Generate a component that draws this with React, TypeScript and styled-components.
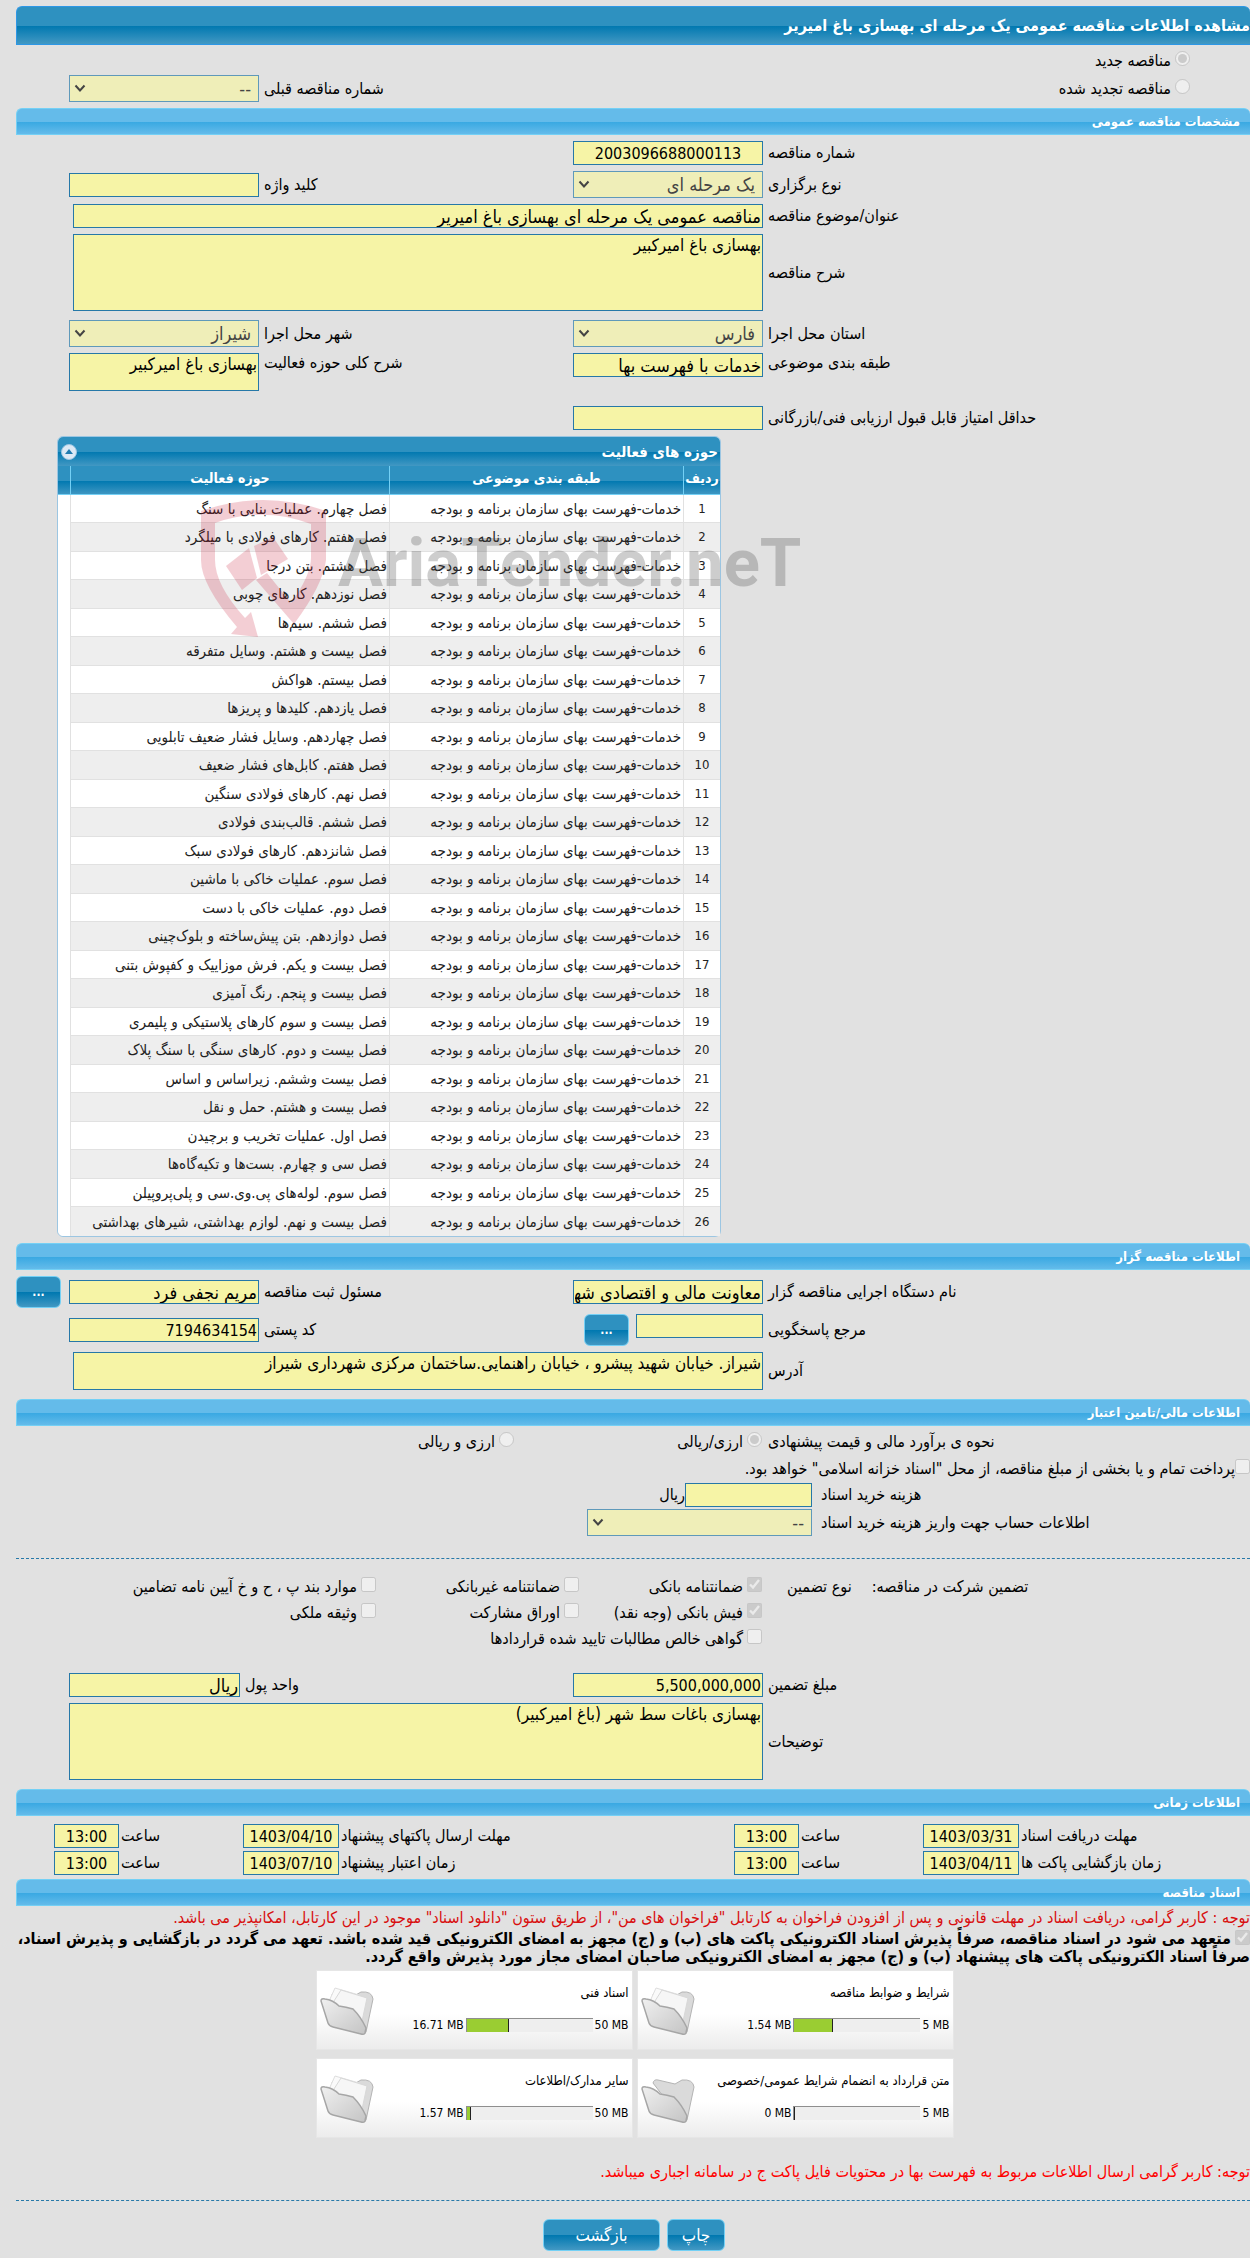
import React from "react";
import styled, { createGlobalStyle, css } from "styled-components";

const fontStack = `Tahoma, "DejaVu Sans Condensed", "DejaVu Sans", sans-serif`;

const GlobalStyle = createGlobalStyle`
  *, *::before, *::after { box-sizing: border-box; }
  body {
    margin: 0;
    background: #e1e1e1;
    color: #000;
    font: 16px/20px ${fontStack};
    overflow-x: hidden;
  }
  input, select, textarea, button { font-family: ${fontStack}; margin: 0; }
`;

const darkBlue = `linear-gradient(#2e91c0 0%, #2e91c0 50%, #0078b0 51%, #4298c3 100%)`;
const lightBlue = `linear-gradient(#64bbea 0%, #64bbea 50%, #38a8e2 51%, #64bbea 100%)`;

const Page = styled.main`
  padding: 6px 0 0 16px;
`;

const TitleBar = styled.h1`
  margin: 0;
  height: 39px;
  border: 1px solid #2d97e6;
  border-right: 0;
  border-radius: 6px 6px 0 0;
  background: ${darkBlue};
  color: #fff;
  font-size: 16px;
  line-height: 37px;
  font-weight: bold;
`;

const SectionBar = styled.h2<{ $space?: number }>`
  margin: ${(p) => p.$space ?? 6}px 0 0;
  height: 27px;
  padding: 0 10px;
  border: 1px solid #74d0f5;
  border-right: 0;
  border-radius: 6px 6px 0 0;
  background: ${lightBlue};
  color: #fff;
  font-size: 13px;
  line-height: 26px;
  font-weight: bold;
`;

const Row = styled.div<{ $space?: number; $top?: boolean; $narrow?: boolean }>`
  display: grid;
  grid-template-columns: ${(p) =>
    p.$narrow
      ? "minmax(0, 487fr) 190px minmax(0, 333fr) 171px 53px"
      : "minmax(0, 487fr) 190px minmax(0, 314fr) 190px 53px"};
  align-items: ${(p) => (p.$top ? "start" : "center")};
  margin-top: ${(p) => p.$space ?? 6}px;

  & > label {
    line-height: ${(p) => (p.$top ? 20 : 24)}px;
  }
`;

const Label = styled.label`
  padding-left: 5px;
  text-align: left;
  line-height: 24px;
  white-space: nowrap;
`;

const WideCell = styled.div<{ $full?: boolean }>`
  grid-column: 2 / 5;
  display: flex;
  padding-left: ${(p) => (p.$full ? 0 : 4)}px;
`;

const fieldLook = css`
  border: 1px solid #2678a8;
  border-radius: 0;
  background: #f6f4a6;
  color: #000;
  outline: none;
`;

const Input = styled.input<{ $width?: number; $center?: boolean; $digits?: boolean }>`
  ${fieldLook}
  width: ${(p) => (p.$width ? `${p.$width}px` : "100%")};
  height: 24px;
  padding: 0 1px;
  font-size: ${(p) => (p.$digits ? 16 : 18)}px;
  text-align: ${(p) => (p.$center ? "center" : "right")};
`;

const Area = styled.textarea<{ $height: number }>`
  ${fieldLook}
  display: block;
  width: 100%;
  height: ${(p) => p.$height}px;
  padding: 0 1px;
  resize: none;
  overflow: hidden;
  font-size: 17px;
  line-height: 20px;
`;

const SelectBox = styled.div<{ $width: number }>`
  position: relative;
  width: ${(p) => p.$width}px;
  height: 27px;

  svg {
    position: absolute;
    left: 5px;
    top: 9px;
    pointer-events: none;
  }
`;

const SelectField = styled.select`
  appearance: none;
  width: 100%;
  height: 100%;
  padding: 0 7px;
  border: 1px solid #5f99ba;
  border-radius: 0;
  background: #efeeb8;
  color: #444;
  font-size: 18px;
  opacity: 1;
`;

const Option = styled.span<{ $indent?: number; $gap?: number }>`
  display: inline-flex;
  align-items: flex-start;
  gap: ${(p) => p.$gap ?? 4}px;
  padding-right: ${(p) => p.$indent ?? 1}px;
  line-height: 24px;
  white-space: nowrap;
`;

const Tick = styled.input`
  flex: none;
  width: 15px;
  height: 15px;
  margin-top: 2px;
`;

const BlueButton = styled.button<{ $width: number }>`
  width: ${(p) => p.$width}px;
  height: 32px;
  padding: 0;
  border: 1px solid #74d0f5;
  border-radius: 6px;
  background: ${darkBlue};
  color: #fff;
  font-size: 17px;
`;

const DotsButton = styled(BlueButton)`
  font-size: 12px;
  font-weight: bold;
`;

const ReferenceCell = styled.div`
  display: flex;
  gap: 7px;
`;

const EndCell = styled.div`
  display: flex;
  justify-content: flex-end;
`;

const Panel = styled.section`
  position: relative;
  width: 664px;
  margin: 6px auto 0 41px;
  border: 1px solid #9cc6e2;
  border-radius: 6px;
  background: #fff;
`;

const PanelTitle = styled.div`
  display: flex;
  align-items: center;
  justify-content: space-between;
  height: 29px;
  padding: 0 2px 0 3px;
  border-radius: 5px 5px 0 0;
  background: ${darkBlue};
  color: #fff;

  h3 {
    margin: 0;
    font-size: 15px;
  }
`;

const CollapseButton = styled.button`
  display: grid;
  place-items: center;
  width: 16px;
  height: 16px;
  padding: 0;
  border: 1px solid #9cc6e2;
  border-radius: 8px;
  background: #dce9f5;
`;

const ActivityTable = styled.table`
  width: 100%;
  border-collapse: separate;
  border-spacing: 0;
  table-layout: fixed;
  color: #222;
  font-size: 15px;
  line-height: 18px;

  thead tr {
    height: 29px;
    background: ${darkBlue};
  }
  th {
    padding: 0 0 4px;
    border-left: 1px solid #74d0f5;
    border-bottom: 1px solid #74d0f5;
    color: #fff;
    font-size: 14px;
  }
  td {
    padding: 0 2px;
    border-left: 1px solid #e1e1e1;
    border-bottom: 1px solid #e1e1e1;
    white-space: nowrap;
  }
  td:first-child {
    text-align: center;
    font-size: 13px;
  }
  tbody tr { height: 28px; }
  tbody tr:nth-child(even) { height: 29px; }
  tbody tr:nth-child(even) td { background: #eee; }
  th:last-child { border-left: 0; }
  tbody td:last-child, tbody tr:nth-child(even) td:last-child {
    border: 0;
    background: #fff;
  }
  tbody tr:last-child td { border-bottom: 0; }
  tbody tr:last-child td:last-child { border-radius: 0 0 0 6px; }
`;

const Watermark = styled.div`
  position: absolute;
  left: 143px;
  top: 63px;
  display: flex;
  gap: 12px;
  direction: ltr;
  pointer-events: none;

  span {
    margin-top: 18px;
    color: rgba(70, 70, 70, 0.27);
    font: bold 67px/90px Roboto, sans-serif;
  }
`;

const CostRow = styled.div<{ $space: number }>`
  display: grid;
  grid-template-columns: minmax(0, 438fr) minmax(0, 796fr);
  align-items: center;
  margin-top: ${(p) => p.$space}px;

  label { padding-left: 9px; }
`;

const Inline = styled.div`
  display: flex;
  align-items: center;
`;

const PayRow = styled.div`
  margin-top: 3px;
  height: 24px;
`;

const Divider = styled.hr<{ $space: number }>`
  margin: ${(p) => p.$space}px 0 0;
  border: 0;
  border-top: 1px dashed #2678a8;
`;

const Guarantee = styled.div`
  display: grid;
  grid-template-columns: minmax(0, 487fr) minmax(0, 747fr);
  margin-top: 16px;
`;

const GuaranteeLabels = styled.div`
  display: flex;
  justify-content: flex-end;
  gap: 20px;
  padding-left: 24px;
  line-height: 24px;
`;

const GuaranteeOptions = styled.div`
  display: grid;
  grid-template-columns: 183px 203px 1fr;
  row-gap: 2px;
`;

const FullOption = styled.div`
  grid-column: 1 / -1;
`;

const TimeGrid = styled.div`
  display: grid;
  grid-template-columns:
    minmax(0, 231fr) 96px 124px 65px
    minmax(0, 395fr) 96px 124px 65px 38px;
  row-gap: 3px;
  align-items: center;
  margin-top: 8px;

  label { padding-left: 2px; }
`;

const Notice = styled.p<{ $space: number; $color: string }>`
  margin: ${(p) => p.$space}px 0 0;
  color: ${(p) => p.$color};
  line-height: 24px;
  white-space: nowrap;
`;

const Pledge = styled.div`
  font-size: 16px;
  line-height: 18px;
  font-weight: bold;

  input { vertical-align: top; margin: 0 0 0 4px; }
`;

const Cards = styled.div`
  display: grid;
  grid-template-columns: repeat(2, 317px);
  justify-content: center;
  gap: 8px 4px;
  margin-top: 4px;
  padding-left: 3px;
`;

const Card = styled.article`
  display: flex;
  justify-content: space-between;
  height: 80px;
  padding: 12px 3px 0;
  border: 1px solid #e6e6e6;
  background: linear-gradient(#fff 55%, #ececec);
  font-size: 12px;

  svg { margin-top: 4px; }
`;

const CardBody = styled.div`
  h4 {
    margin: 0 0 12px;
    font-size: 13px;
    line-height: 20px;
    font-weight: normal;
    white-space: nowrap;
  }
`;

const Usage = styled.div`
  display: grid;
  grid-template-columns: auto 127px auto;
  justify-content: end;
  align-items: center;
  gap: 2px;
  direction: ltr;
`;

const Track = styled.div`
  height: 14px;
  border-top: 1px solid #8e8e8e;
  border-left: 1px solid #8e8e8e;
  background: #eee;
`;

const Fill = styled.div`
  height: 100%;
  min-width: 1px;
  border-right: 1px solid #222;
  background: #9acd32;
`;

const Actions = styled.footer`
  display: flex;
  justify-content: center;
  gap: 7px;
  margin: 18px 0 7px;
  padding-left: 2px;
`;

const Chevron = () => (
  <svg width="12" height="9" viewBox="0 0 12 9" fill="none" stroke="#444" strokeWidth="2">
    <path d="M1.5 1.5 6 6.5l4.5-5" />
  </svg>
);

const Select = ({ id, value, width = 190 }: { id: string; value: string; width?: number }) => (
  <SelectBox $width={width}>
    <SelectField id={id} disabled defaultValue={value}>
      <option>{value}</option>
    </SelectField>
    <Chevron />
  </SelectBox>
);

type ChoiceProps = {
  id: string;
  type: "radio" | "checkbox";
  text: string;
  checked?: boolean;
  indent?: number;
  gap?: number;
};

const Choice = ({ id, type, text, checked, indent, gap }: ChoiceProps) => (
  <Option $indent={indent} $gap={gap}>
    <Tick id={id} type={type} disabled defaultChecked={checked} />
    <label htmlFor={id}>{text}</label>
  </Option>
);

const Folder = ({ id, empty }: { id: string; empty?: boolean }) => (
  <svg width="54" height="50" viewBox="0 0 54 50" aria-hidden="true">
    <defs>
      <linearGradient id={id} x1="0" y1="0" x2="1" y2="1">
        <stop offset="0" stopColor="#f0f0f0" />
        <stop offset="1" stopColor="#c4c4c4" />
      </linearGradient>
    </defs>
    <path
      d="M12 8Q13 4 17 5L34 9L41 5Q52 4 53 12L46 45Q45 48 42 47Z"
      fill="#dadada"
      stroke="#b4b4b4"
    />
    {!empty && (
      <>
        <path d="M10 12 15 1l24 7-3 24-22-6Z" fill="#fafafa" stroke="#dedede" />
        <path d="M14 14 21 3l26 8-6 28-24-9Z" fill="#f6f6f6" stroke="#d8d8d8" />
      </>
    )}
    <path
      d="M1 14Q1 11 5 12Q13 13 19 19Q26 20 33 22Q41 30 46 41L45 46Q44 48 41 47L13 40Q9 39 8 36Z"
      fill={`url(#${id})`}
      stroke="#a6a6a6"
      strokeWidth="1.5"
    />
  </svg>
);

const category = "خدمات-فهرست بهای سازمان برنامه و بودجه";
const activities = [
  "فصل چهارم. عملیات بنایی با سنگ",
  "فصل هفتم. کارهای فولادی با میلگرد",
  "فصل هشتم. بتن درجا",
  "فصل نوزدهم. کارهای چوبی",
  "فصل ششم. سیم‌ها",
  "فصل بیست و هشتم. وسایل متفرقه",
  "فصل بیستم. هواکش",
  "فصل یازدهم. کلیدها و پریزها",
  "فصل چهاردهم. وسایل فشار ضعیف تابلویی",
  "فصل هفتم. کابل‌های فشار ضعیف",
  "فصل نهم. کارهای فولادی سنگین",
  "فصل ششم. قالب‌بندی فولادی",
  "فصل شانزدهم. کارهای فولادی سبک",
  "فصل سوم. عملیات خاکی با ماشین",
  "فصل دوم. عملیات خاکی با دست",
  "فصل دوازدهم. بتن پیش‌ساخته و بلوک‌چینی",
  "فصل بیست و یکم. فرش موزاییک و کفپوش بتنی",
  "فصل بیست و پنجم. رنگ آمیزی",
  "فصل بیست و سوم کارهای پلاستیکی و پلیمری",
  "فصل بیست و دوم. کارهای سنگی با سنگ پلاک",
  "فصل بیست وششم. زیراساس و اساس",
  "فصل بیست و هشتم. حمل و نقل",
  "فصل اول. عملیات تخریب و برچیدن",
  "فصل سی و چهارم. بست‌ها و تکیه‌گاه‌ها",
  "فصل سوم. لوله‌های پی.وی.سی و پلی‌پروپیلن",
  "فصل بیست و نهم. لوازم بهداشتی، شیرهای بهداشتی",
];

const deadlines = [
  ["مهلت دریافت اسناد", "1403/03/31", "مهلت ارسال پاکتهای پیشنهاد", "1403/04/10"],
  ["زمان بازگشایی پاکت ها", "1403/04/11", "زمان اعتبار پیشنهاد", "1403/07/10"],
];

const files = [
  { title: "شرایط و ضوابط مناقصه", used: 1.54, max: 5 },
  { title: "اسناد فنی", used: 16.71, max: 50 },
  { title: "متن قرارداد به انضمام شرایط عمومی/خصوصی", used: 0, max: 5 },
  { title: "سایر مدارک/اطلاعات", used: 1.57, max: 50 },
];

export default function App() {
  return (
    <Page dir="rtl" lang="fa">
      <GlobalStyle />
      <TitleBar>مشاهده اطلاعات مناقصه عمومی یک مرحله ای بهسازی باغ امیریر</TitleBar>

      <Row $space={4}>
        <Choice id="tender-new" type="radio" text="مناقصه جدید" checked indent={60} />
      </Row>
      <Row $space={2}>
        <Choice id="tender-renewed" type="radio" text="مناقصه تجدید شده" indent={60} />
        <span />
        <Label htmlFor="previous">شماره مناقصه قبلی</Label>
        <Select id="previous" value="--" />
      </Row>

      <SectionBar>مشخصات مناقصه عمومی</SectionBar>
      <Row>
        <Label htmlFor="number">شماره مناقصه</Label>
        <Input id="number" readOnly $center $digits defaultValue="2003096688000113" />
      </Row>
      <Row>
        <Label htmlFor="kind">نوع برگزاری</Label>
        <Select id="kind" value="یک مرحله ای" />
        <Label htmlFor="keyword">کلید واژه</Label>
        <Input id="keyword" readOnly />
      </Row>
      <Row>
        <Label htmlFor="subject">عنوان/موضوع مناقصه</Label>
        <WideCell>
          <Input id="subject" readOnly defaultValue="مناقصه عمومی یک مرحله ای بهسازی باغ امیریر" />
        </WideCell>
      </Row>
      <Row>
        <Label htmlFor="description">شرح مناقصه</Label>
        <WideCell>
          <Area id="description" readOnly $height={77} defaultValue="بهسازی باغ امیرکبیر" />
        </WideCell>
      </Row>
      <Row $space={9}>
        <Label htmlFor="province">استان محل اجرا</Label>
        <Select id="province" value="فارس" />
        <Label htmlFor="city">شهر محل اجرا</Label>
        <Select id="city" value="شیراز" />
      </Row>
      <Row $top>
        <Label htmlFor="category">طبقه بندی موضوعی</Label>
        <Input id="category" readOnly defaultValue="خدمات با فهرست بها" />
        <Label htmlFor="scope">شرح کلی حوزه فعالیت</Label>
        <Area id="scope" readOnly $height={38} defaultValue="بهسازی باغ امیرکبیر" />
      </Row>
      <Row $space={15}>
        <Label htmlFor="score">حداقل امتیاز قابل قبول ارزیابی فنی/بازرگانی</Label>
        <Input id="score" readOnly />
      </Row>

      <Panel>
        <PanelTitle>
          <h3>حوزه های فعالیت</h3>
          <CollapseButton type="button" aria-label="بستن">
            <svg width="8" height="5" viewBox="0 0 8 5">
              <path d="M0 5 4 0l4 5Z" fill="#217bb0" />
            </svg>
          </CollapseButton>
        </PanelTitle>
        <ActivityTable>
          <colgroup>
            <col style={{ width: 37 }} />
            <col style={{ width: 294 }} />
            <col style={{ width: 319 }} />
            <col />
          </colgroup>
          <thead>
            <tr>
              <th scope="col">ردیف</th>
              <th scope="col">طبقه بندی موضوعی</th>
              <th scope="col">حوزه فعالیت</th>
              <th />
            </tr>
          </thead>
          <tbody>
            {activities.map((name, i) => (
              <tr key={i}>
                <td>{i + 1}</td>
                <td>{category}</td>
                <td>{name}</td>
                <td />
              </tr>
            ))}
          </tbody>
        </ActivityTable>
        <Watermark>
          <svg width="125" height="138" viewBox="0 0 125 138" fill="#c8102e" opacity="0.2">
            <path d="M0 11Q62-11 125 11V60Q122 85 93 124L55 80 66 73 90 103Q110 75 110 58V24Q62 6 14 23V60Q14 85 44 118L50 112 57 137 30 134 36 127Q0 85 0 60Z" />
            <path d="M25 66 48 48 56 78 41 90Z" />
            <path d="M53 46 72 37 87 59 60 75Z" />
          </svg>
          <span>AriaTender.neT</span>
        </Watermark>
      </Panel>

      <SectionBar>اطلاعات مناقصه گزار</SectionBar>
      <Row>
        <Label htmlFor="agency">نام دستگاه اجرایی مناقصه گزار</Label>
        <Input id="agency" readOnly defaultValue="معاونت مالی و اقتصادی شهرداری شیراز" />
        <Label htmlFor="registrar">مسئول ثبت مناقصه</Label>
        <Input id="registrar" readOnly defaultValue="مریم نجفی فرد" />
        <EndCell>
          <DotsButton type="button" $width={45}>...</DotsButton>
        </EndCell>
      </Row>
      <Row>
        <Label htmlFor="contact">مرجع پاسخگویی</Label>
        <ReferenceCell>
          <Input id="contact" readOnly $width={127} />
          <DotsButton type="button" $width={45}>...</DotsButton>
        </ReferenceCell>
        <Label htmlFor="postal">کد پستی</Label>
        <Input id="postal" readOnly $digits defaultValue="7194634154" />
      </Row>
      <Row>
        <Label htmlFor="address">آدرس</Label>
        <WideCell>
          <Area
            id="address"
            readOnly
            $height={38}
            defaultValue="شیراز. خیابان شهید پیشرو ، خیابان راهنمایی.ساختمان مرکزی شهرداری شیراز"
          />
        </WideCell>
      </Row>

      <SectionBar $space={9}>اطلاعات مالی/تامین اعتبار</SectionBar>
      <Row $space={4}>
        <Label as="span">نحوه ی برآورد مالی و قیمت پیشنهادی</Label>
        <Choice id="estimate-single" type="radio" text="ارزی/ریالی" checked />
        <Choice id="estimate-both" type="radio" text="ارزی و ریالی" indent={59} />
      </Row>
      <PayRow>
        <Choice
          id="treasury"
          type="checkbox"
          text={'پرداخت تمام و یا بخشی از مبلغ مناقصه، از محل "اسناد خزانه اسلامی" خواهد بود.'}
          indent={0}
          gap={0}
        />
      </PayRow>
      <CostRow $space={2}>
        <Label htmlFor="fee">هزینه خرید اسناد</Label>
        <Inline>
          <Input id="fee" readOnly $width={127} />
          <span>ریال</span>
        </Inline>
      </CostRow>
      <CostRow $space={2}>
        <Label htmlFor="account">اطلاعات حساب جهت واریز هزینه خرید اسناد</Label>
        <Select id="account" value="--" width={225} />
      </CostRow>

      <Divider $space={22} />
      <Guarantee>
        <GuaranteeLabels>
          <span>تضمین شرکت در مناقصه:</span>
          <span>نوع تضمین</span>
        </GuaranteeLabels>
        <GuaranteeOptions>
          <Choice id="g1" type="checkbox" text="ضمانتنامه بانکی" checked />
          <Choice id="g2" type="checkbox" text="ضمانتنامه غیربانکی" />
          <Choice id="g3" type="checkbox" text="موارد بند پ ، ح و خ آیین نامه تضامین" />
          <Choice id="g4" type="checkbox" text="فیش بانکی (وجه نقد)" checked />
          <Choice id="g5" type="checkbox" text="اوراق مشارکت" />
          <Choice id="g6" type="checkbox" text="وثیقه ملکی" />
          <FullOption>
            <Choice id="g7" type="checkbox" text="گواهی خالص مطالبات تایید شده قراردادها" />
          </FullOption>
        </GuaranteeOptions>
      </Guarantee>
      <Row $space={22} $narrow>
        <Label htmlFor="amount">مبلغ تضمین</Label>
        <Input id="amount" readOnly $digits defaultValue="5,500,000,000" />
        <Label htmlFor="unit">واحد پول</Label>
        <Input id="unit" readOnly defaultValue="ریال" />
      </Row>
      <Row>
        <Label htmlFor="notes">توضیحات</Label>
        <WideCell $full>
          <Area id="notes" readOnly $height={77} defaultValue="بهسازی باغات سط شهر (باغ امیرکبیر)" />
        </WideCell>
      </Row>

      <SectionBar $space={9}>اطلاعات زمانی</SectionBar>
      <TimeGrid>
        {deadlines.map(([first, firstDate, second, secondDate], i) => (
          <React.Fragment key={i}>
            <Label htmlFor={`d${i}a`}>{first}</Label>
            <Input id={`d${i}a`} readOnly $center $digits defaultValue={firstDate} />
            <Label htmlFor={`t${i}a`}>ساعت</Label>
            <Input id={`t${i}a`} readOnly $center $digits defaultValue="13:00" />
            <Label htmlFor={`d${i}b`}>{second}</Label>
            <Input id={`d${i}b`} readOnly $center $digits defaultValue={secondDate} />
            <Label htmlFor={`t${i}b`}>ساعت</Label>
            <Input id={`t${i}b`} readOnly $center $digits defaultValue="13:00" />
            <span />
          </React.Fragment>
        ))}
      </TimeGrid>

      <SectionBar $space={4}>اسناد مناقصه</SectionBar>
      <Notice $space={0} $color="#d80f0f">
        توجه : کاربر گرامی، دریافت اسناد در مهلت قانونی و پس از افزودن فراخوان به کارتابل "فراخوان
        های من"، از طریق ستون "دانلود اسناد" موجود در این کارتابل، امکانپذیر می باشد.
      </Notice>
      <Pledge>
        <Tick id="pledge" type="checkbox" disabled defaultChecked />
        <label htmlFor="pledge">
          متعهد می شود در اسناد مناقصه، صرفاً پذیرش اسناد الکترونیکی پاکت های (ب) و (ج) مجهز به امضای
          الکترونیکی قید شده باشد. تعهد می گردد در بازگشایی و پذیرش اسناد، صرفاً اسناد الکترونیکی
          پاکت های پیشنهاد (ب) و (ج) مجهز به امضای الکترونیکی صاحبان امضای مجاز مورد پذیرش واقع گردد.
        </label>
      </Pledge>
      <Cards>
        {files.map((f, i) => (
          <Card key={f.title}>
            <CardBody>
              <h4>{f.title}</h4>
              <Usage>
                <span>{f.used} MB</span>
                <Track role="progressbar" aria-label={f.title} aria-valuenow={f.used} aria-valuemax={f.max}>
                  <Fill style={{ width: `${(f.used / f.max) * 100}%` }} />
                </Track>
                <span>{f.max} MB</span>
              </Usage>
            </CardBody>
            <Folder id={`folder-${i}`} empty={f.used === 0} />
          </Card>
        ))}
      </Cards>
      <Notice $space={22} $color="#f00">
        توجه: کاربر گرامی ارسال اطلاعات مربوط به فهرست بها در محتویات فایل پاکت ج در سامانه اجباری
        میباشد.
      </Notice>
      <Divider $space={16} />
      <Actions>
        <BlueButton type="button" $width={58}>چاپ</BlueButton>
        <BlueButton type="button" $width={117}>بازگشت</BlueButton>
      </Actions>
    </Page>
  );
}
